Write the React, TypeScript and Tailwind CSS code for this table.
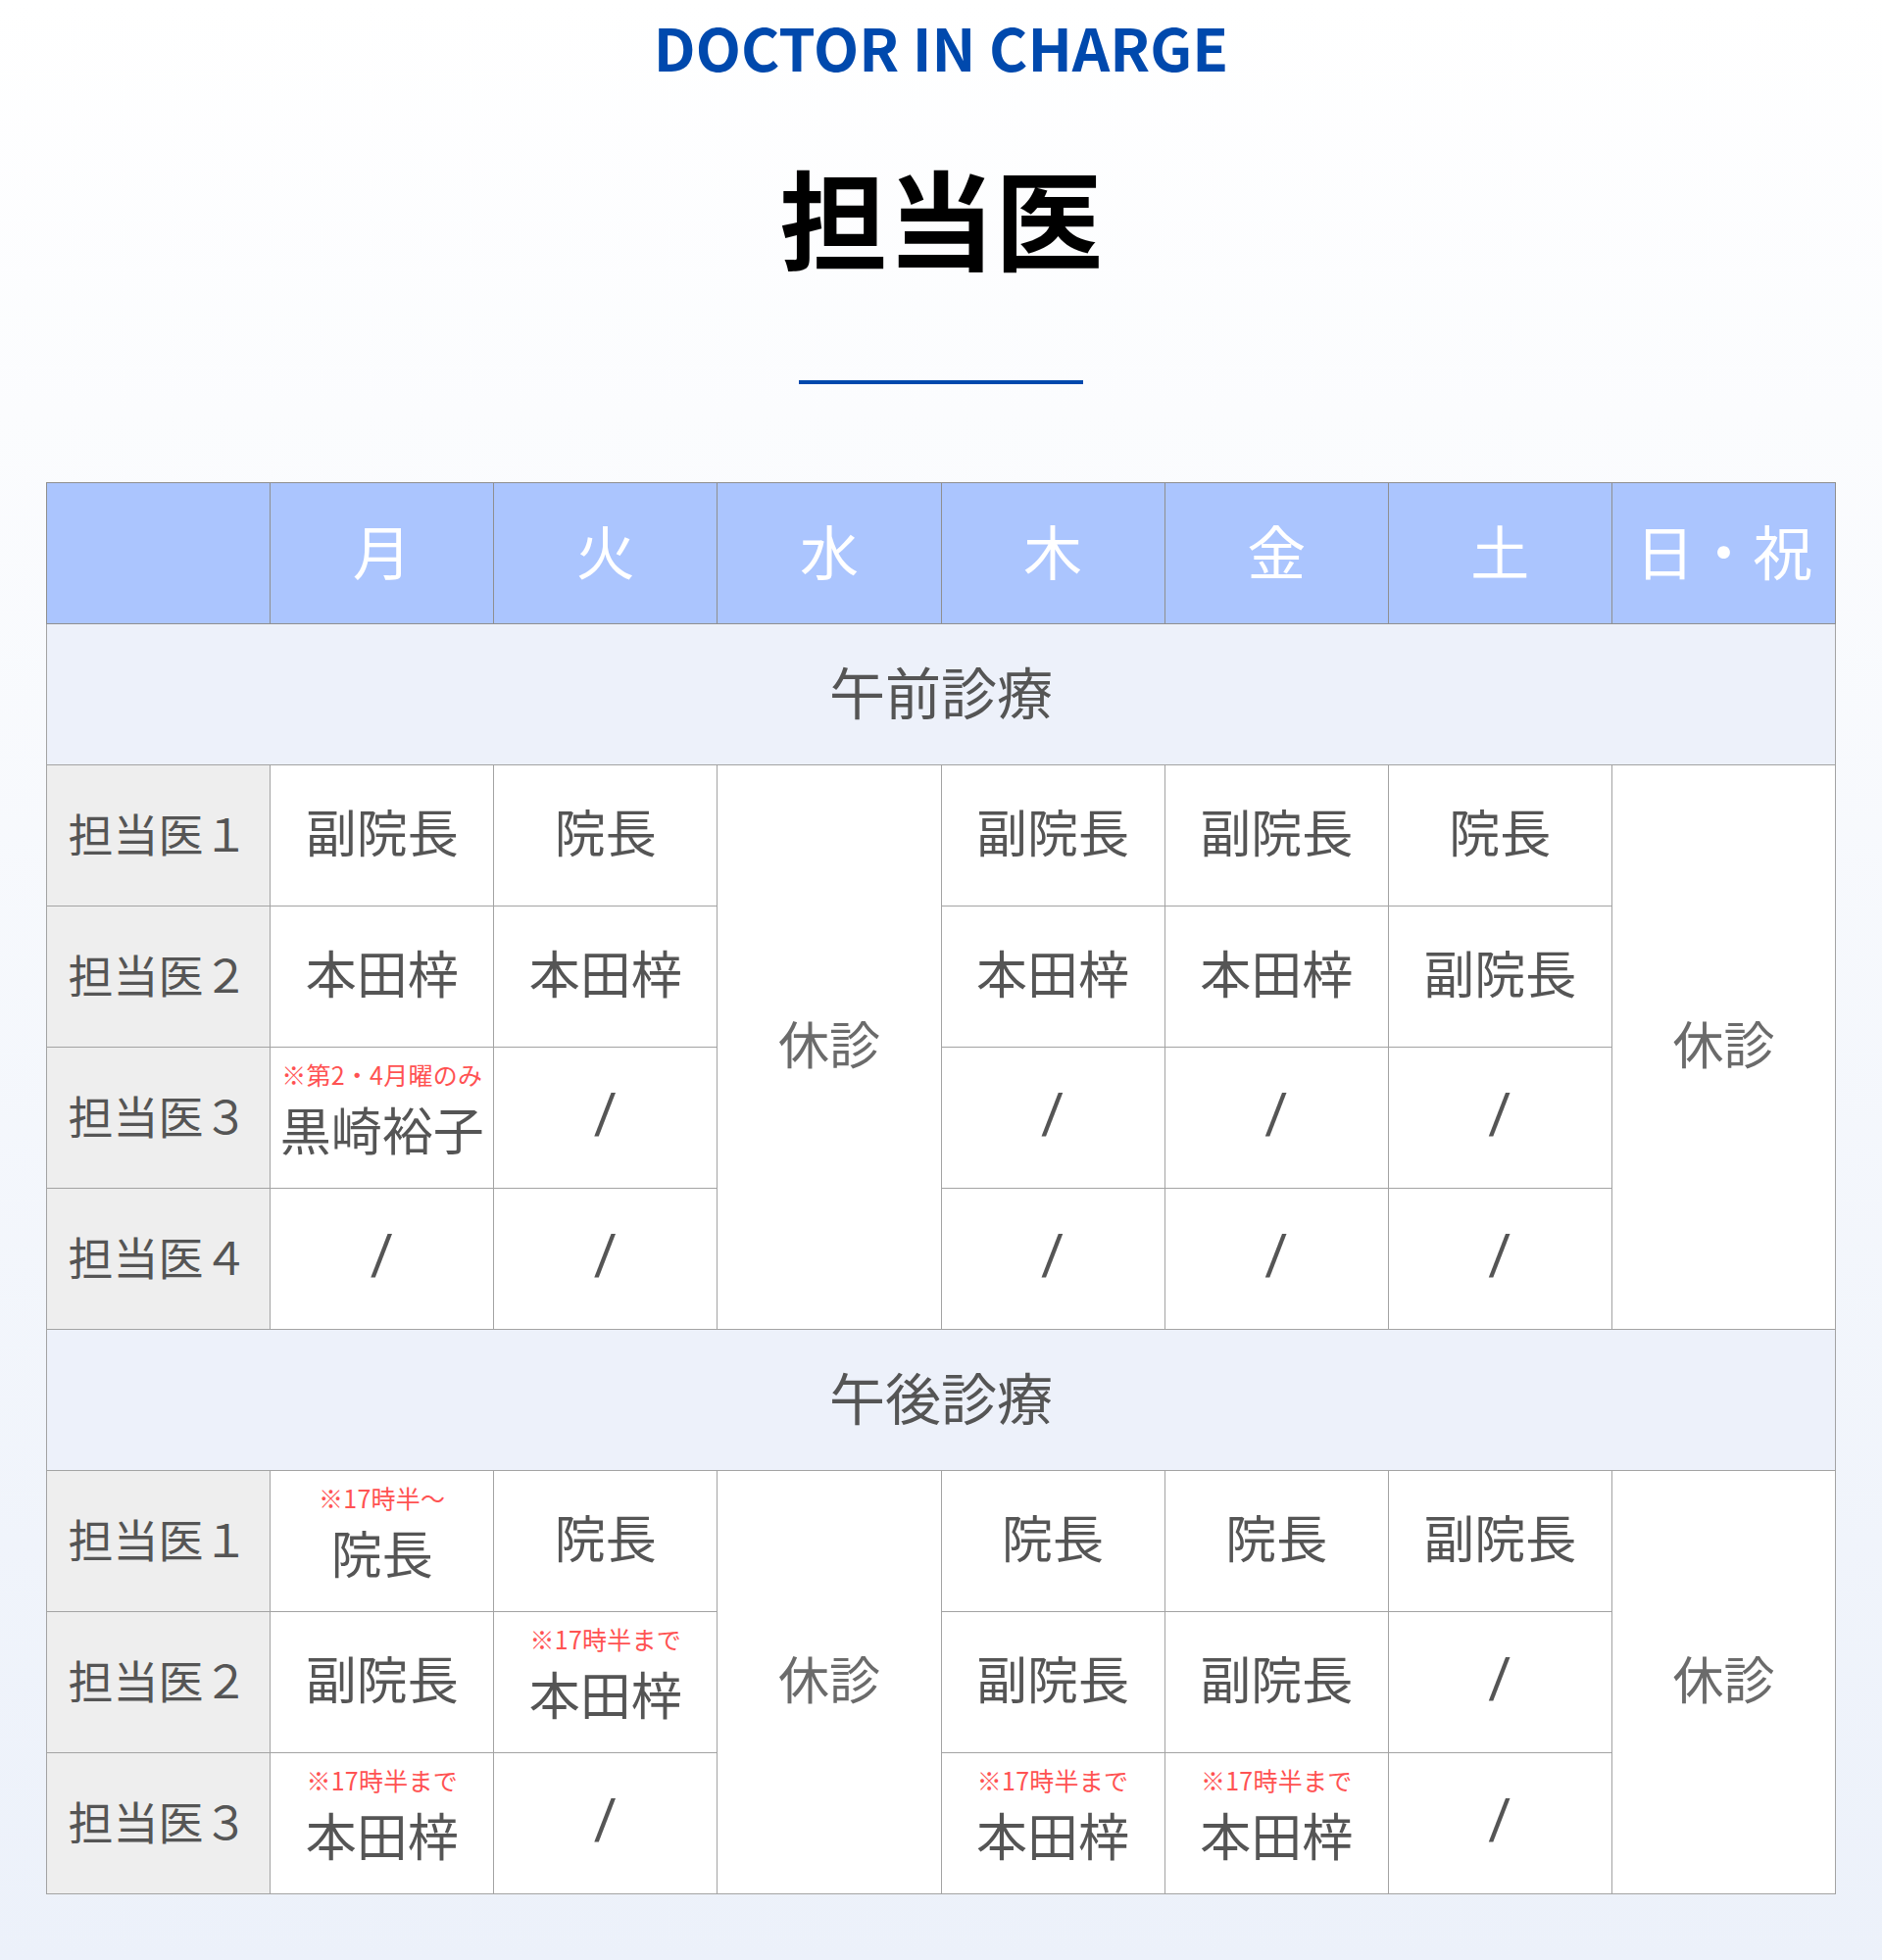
type Cell = { text: string; note?: string; rowSpan?: number };

const days = ["月", "火", "水", "木", "金", "土", "日・祝"];

const morning: Cell[][] = [
  [
    { text: "副院長" },
    { text: "院長" },
    { text: "休診", rowSpan: 4 },
    { text: "副院長" },
    { text: "副院長" },
    { text: "院長" },
    { text: "休診", rowSpan: 4 },
  ],
  [{ text: "本田梓" }, { text: "本田梓" }, { text: "本田梓" }, { text: "本田梓" }, { text: "副院長" }],
  [{ text: "黒崎裕子", note: "※第2・4月曜のみ" }, { text: "/" }, { text: "/" }, { text: "/" }, { text: "/" }],
  [{ text: "/" }, { text: "/" }, { text: "/" }, { text: "/" }, { text: "/" }],
];

const afternoon: Cell[][] = [
  [
    { text: "院長", note: "※17時半〜" },
    { text: "院長" },
    { text: "休診", rowSpan: 3 },
    { text: "院長" },
    { text: "院長" },
    { text: "副院長" },
    { text: "休診", rowSpan: 3 },
  ],
  [{ text: "副院長" }, { text: "本田梓", note: "※17時半まで" }, { text: "副院長" }, { text: "副院長" }, { text: "/" }],
  [
    { text: "本田梓", note: "※17時半まで" },
    { text: "/" },
    { text: "本田梓", note: "※17時半まで" },
    { text: "本田梓", note: "※17時半まで" },
    { text: "/" },
  ],
];

const labels = ["担当医１", "担当医２", "担当医３", "担当医４"];

function BodyCell({ cell }: { cell: Cell }) {
  const closed = cell.rowSpan !== undefined;
  const slash = cell.text === "/";

  if (cell.note) {
    return (
      <td className="h-[144px] border border-[#a3a3a3] bg-white pb-[14px] text-center align-middle">
        <div className="text-[25px] leading-[36px] tracking-[0.01em] text-[#ff5252]">{cell.note}</div>
        <div className="text-[52px] leading-[75px] text-[#555555]">{cell.text}</div>
      </td>
    );
  }

  return (
    <td
      rowSpan={cell.rowSpan}
      className="h-[144px] border border-[#a3a3a3] bg-white pb-[10px] text-center align-middle"
    >
      {slash ? (
        <div className="font-['Roboto',sans-serif] text-[58px] leading-none text-[#555555]">/</div>
      ) : (
        <div className={`text-[52px] leading-none ${closed ? "text-[#6b6b6b]" : "text-[#555555]"}`}>
          {cell.text}
        </div>
      )}
    </td>
  );
}

function Section({ title, rows }: { title: string; rows: Cell[][] }) {
  return (
    <>
      <tr>
        <td
          colSpan={8}
          className="h-[144px] border border-[#a3a3a3] bg-[#edf1fa] pb-[8px] text-center align-middle text-[57px] leading-none text-[#555555]"
        >
          {title}
        </td>
      </tr>
      {rows.map((row, i) => (
        <tr key={i}>
          <td className="h-[144px] border border-[#a3a3a3] bg-[#eeeeee] pb-[8px] text-center align-middle text-[46px] leading-none text-[#555555]">
            {labels[i]}
          </td>
          {row.map((cell, j) => (
            <BodyCell key={j} cell={cell} />
          ))}
        </tr>
      ))}
    </>
  );
}

export default function App() {
  return (
    <div className="min-h-[2000px] bg-gradient-to-b from-white to-[#ecf1fa] font-['Noto_Sans_CJK_JP','Noto_Sans',sans-serif]">
      <div className="flex flex-col items-center pt-[17px]">
        <h2 className="text-[60px] font-bold leading-none text-[#0049ad]">DOCTOR IN CHARGE</h2>
        <h1 className="mt-[88px] text-[110px] font-bold leading-none text-black">担当医</h1>
        <div className="mt-[113px] h-[4px] w-[290px] bg-[#0049ad]" />
      </div>

      <div className="px-[47px] pt-[100px] pb-[70px]">
        <table className="w-full table-fixed border-collapse">
          <thead>
            <tr>
              <th className="h-[144px] border border-[#8f8f8f] bg-[#abc5fe]" />
              {days.map((d) => (
                <th
                  key={d}
                  className="h-[144px] border border-[#8f8f8f] bg-[#abc5fe] pb-[8px] text-center align-middle text-[60px] font-normal leading-none text-white"
                >
                  {d}
                </th>
              ))}
            </tr>
          </thead>
          <tbody>
            <Section title="午前診療" rows={morning} />
            <Section title="午後診療" rows={afternoon} />
          </tbody>
        </table>
      </div>
    </div>
  );
}
